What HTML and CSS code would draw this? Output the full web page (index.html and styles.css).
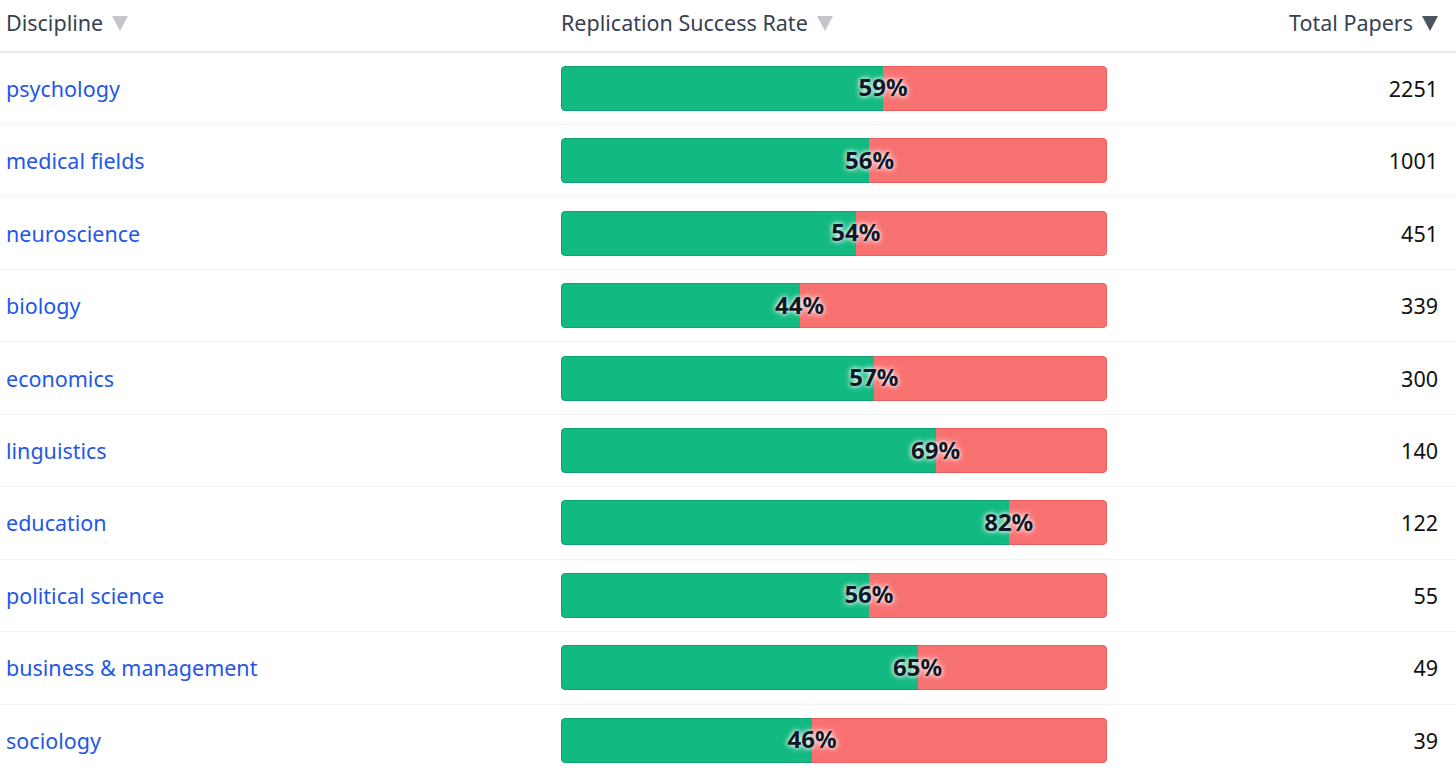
FILE: index.html
```html
<!DOCTYPE html>
<html>
<head>
<meta charset="utf-8">
<link rel="stylesheet" href="styles.css">
</head>
<body>
<table class="tbl">
  <colgroup>
    <col class="c1"><col class="c2"><col class="c3">
  </colgroup>
  <thead>
    <tr>
      <th class="h-left"><span class="hd">Discipline<svg class="arrow" viewBox="0 0 16 15"><path d="M0 0H16L8 15Z"/></svg></span></th>
      <th class="h-left"><span class="hd">Replication Success Rate<svg class="arrow" viewBox="0 0 16 15"><path d="M0 0H16L8 15Z"/></svg></span></th>
      <th class="h-right"><span class="hd">Total Papers<svg class="arrow active" viewBox="0 0 16 15"><path d="M0 0H16L8 15Z"/></svg></span></th>
    </tr>
  </thead>
  <tbody>
    <tr><td><a href="#">psychology</a></td><td><div class="bar"><div class="ok" style="width:59%"></div><div class="bad"></div><span class="lbl" style="left:59%">59%</span></div></td><td class="num">2251</td></tr>
    <tr><td><a href="#">medical fields</a></td><td><div class="bar"><div class="ok" style="width:56.5%"></div><div class="bad"></div><span class="lbl" style="left:56.5%">56%</span></div></td><td class="num">1001</td></tr>
    <tr><td><a href="#">neuroscience</a></td><td><div class="bar"><div class="ok" style="width:54%"></div><div class="bad"></div><span class="lbl" style="left:54%">54%</span></div></td><td class="num">451</td></tr>
    <tr><td><a href="#">biology</a></td><td><div class="bar"><div class="ok" style="width:43.7%"></div><div class="bad"></div><span class="lbl" style="left:43.7%">44%</span></div></td><td class="num">339</td></tr>
    <tr><td><a href="#">economics</a></td><td><div class="bar"><div class="ok" style="width:57.3%"></div><div class="bad"></div><span class="lbl" style="left:57.3%">57%</span></div></td><td class="num">300</td></tr>
    <tr><td><a href="#">linguistics</a></td><td><div class="bar"><div class="ok" style="width:68.6%"></div><div class="bad"></div><span class="lbl" style="left:68.6%">69%</span></div></td><td class="num">140</td></tr>
    <tr><td><a href="#">education</a></td><td><div class="bar"><div class="ok" style="width:82%"></div><div class="bad"></div><span class="lbl" style="left:82%">82%</span></div></td><td class="num">122</td></tr>
    <tr><td><a href="#">political science</a></td><td><div class="bar"><div class="ok" style="width:56.4%"></div><div class="bad"></div><span class="lbl" style="left:56.4%">56%</span></div></td><td class="num">55</td></tr>
    <tr><td><a href="#">business &amp; management</a></td><td><div class="bar"><div class="ok" style="width:65.3%"></div><div class="bad"></div><span class="lbl" style="left:65.3%">65%</span></div></td><td class="num">49</td></tr>
    <tr><td><a href="#">sociology</a></td><td><div class="bar"><div class="ok" style="width:46%"></div><div class="bad"></div><span class="lbl" style="left:46%">46%</span></div></td><td class="num">39</td></tr>
  </tbody>
</table>
</body>
</html>
```
FILE: styles.css
```css
html, body {
  margin: 0;
  padding: 0;
  background: #ffffff;
}
body {
  font-family: "Noto Sans", "Open Sans", sans-serif;
  font-size: 21.5px;
  color: #111111;
}
.tbl {
  width: 100%;
  border-collapse: collapse;
  table-layout: fixed;
}
.c1 { width: 561px; }
.c2 { width: 570px; }
.tbl th {
  font-weight: 400;
  color: #374151;
  height: 50.6px;
  padding: 0;
  vertical-align: top;
  line-height: 45px;
  border-bottom: 2px solid #e8e9eb;
  white-space: nowrap;
}
.tbl th:first-child { padding-left: 6px; }
.h-left { text-align: left; }
.h-right { text-align: right; padding-right: 18px !important; }
.hd {
  display: inline-flex;
  align-items: center;
  gap: 9px;
}
.arrow {
  width: 16px;
  height: 15px;
  fill: #c4c6ca;
  margin-top: 2px;
}
.arrow.active { fill: #4b5563; }
.tbl td {
  height: 71.45px;
  padding: 0;
  border-bottom: 1px solid #f1f2f3;
  vertical-align: middle;
}
.tbl td:first-child { padding-left: 6px; }
.tbl a {
  color: #2357e8;
  text-decoration: none;
}
.num {
  text-align: right;
  padding-right: 18px !important;
  color: #111111;
}
.bar {
  position: relative;
  display: flex;
  width: 546px;
  height: 45px;
  border-radius: 4px;
  overflow: hidden;
  box-sizing: border-box;
}
.ok {
  background: #12b981;
  border: 1px solid #0ea271;
  border-right: none;
  border-radius: 4px 0 0 4px;
  box-sizing: border-box;
}
.bad {
  flex: 1;
  background: #f87171;
  border: 1px solid #ef5d5d;
  border-left: none;
  border-radius: 0 4px 4px 0;
}
.lbl {
  position: absolute;
  top: 50%;
  transform: translate(-50%, -54%);
  font-weight: 700;
  font-size: 24px;
  color: #101828;
  text-shadow: 0 0 4px #ffffff, 0 0 7px rgba(255,255,255,0.8);
}
```
